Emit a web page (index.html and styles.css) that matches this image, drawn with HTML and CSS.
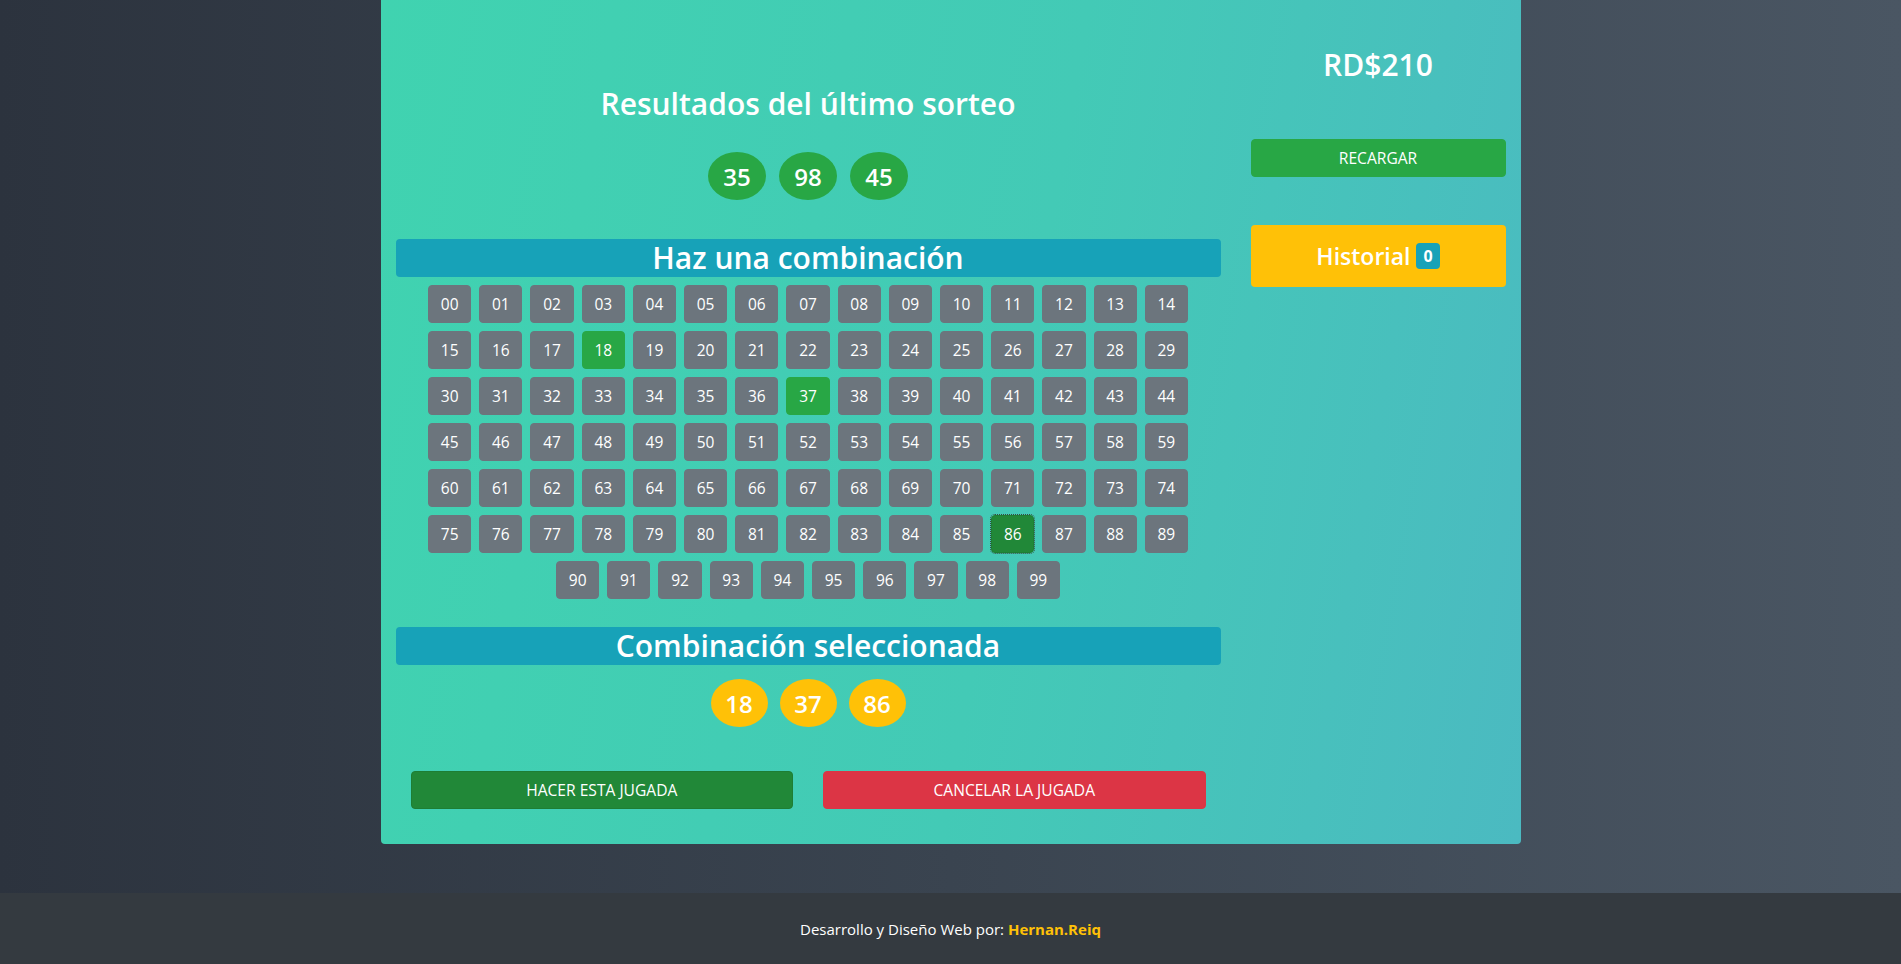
FILE: index.html
```html
<!DOCTYPE html>
<html lang="es">
<head>
<meta charset="utf-8">
<title>Lotería</title>
<link rel="stylesheet" href="styles.css">
</head>
<body>
<main class="page">
  <div class="card">
    <section class="col-main">
      <h3 class="title">Resultados del último sorteo</h3>
      <div class="balls balls-result">
        <span class="ball ball-green">35</span>
        <span class="ball ball-green">98</span>
        <span class="ball ball-green">45</span>
      </div>
      <h2 class="banner">Haz una combinación</h2>
      <div class="grid">
        <button class="num">00</button><button class="num">01</button><button class="num">02</button><button class="num">03</button><button class="num">04</button><button class="num">05</button><button class="num">06</button><button class="num">07</button><button class="num">08</button><button class="num">09</button><button class="num">10</button><button class="num">11</button><button class="num">12</button><button class="num">13</button><button class="num">14</button>
        <button class="num">15</button><button class="num">16</button><button class="num">17</button><button class="num num-on">18</button><button class="num">19</button><button class="num">20</button><button class="num">21</button><button class="num">22</button><button class="num">23</button><button class="num">24</button><button class="num">25</button><button class="num">26</button><button class="num">27</button><button class="num">28</button><button class="num">29</button>
        <button class="num">30</button><button class="num">31</button><button class="num">32</button><button class="num">33</button><button class="num">34</button><button class="num">35</button><button class="num">36</button><button class="num num-on">37</button><button class="num">38</button><button class="num">39</button><button class="num">40</button><button class="num">41</button><button class="num">42</button><button class="num">43</button><button class="num">44</button>
        <button class="num">45</button><button class="num">46</button><button class="num">47</button><button class="num">48</button><button class="num">49</button><button class="num">50</button><button class="num">51</button><button class="num">52</button><button class="num">53</button><button class="num">54</button><button class="num">55</button><button class="num">56</button><button class="num">57</button><button class="num">58</button><button class="num">59</button>
        <button class="num">60</button><button class="num">61</button><button class="num">62</button><button class="num">63</button><button class="num">64</button><button class="num">65</button><button class="num">66</button><button class="num">67</button><button class="num">68</button><button class="num">69</button><button class="num">70</button><button class="num">71</button><button class="num">72</button><button class="num">73</button><button class="num">74</button>
        <button class="num">75</button><button class="num">76</button><button class="num">77</button><button class="num">78</button><button class="num">79</button><button class="num">80</button><button class="num">81</button><button class="num">82</button><button class="num">83</button><button class="num">84</button><button class="num">85</button><button class="num num-focus">86</button><button class="num">87</button><button class="num">88</button><button class="num">89</button>
        <button class="num">90</button><button class="num">91</button><button class="num">92</button><button class="num">93</button><button class="num">94</button><button class="num">95</button><button class="num">96</button><button class="num">97</button><button class="num">98</button><button class="num">99</button>
      </div>
      <h2 class="banner banner-selected">Combinación seleccionada</h2>
      <div class="balls balls-selected">
        <span class="ball ball-yellow">18</span>
        <span class="ball ball-yellow">37</span>
        <span class="ball ball-yellow">86</span>
      </div>
      <div class="actions">
        <button class="btn btn-play">Hacer esta jugada</button>
        <button class="btn btn-cancel">Cancelar la jugada</button>
      </div>
    </section>
    <aside class="col-side">
      <h3 class="money">RD$210</h3>
      <button class="btn btn-recharge">Recargar</button>
      <button class="btn-history">Historial <span class="badge">0</span></button>
    </aside>
  </div>
</main>
<footer class="footer">
  <p class="credit">Desarrollo y Diseño Web por: <strong class="author">Hernan.Reiq</strong></p>
</footer>
</body>
</html>
```
FILE: styles.css
```css
* { box-sizing: border-box; }

html, body {
  margin: 0;
  padding: 0;
}

body {
  min-height: 964px;
  display: flex;
  flex-direction: column;
  font-family: "Open Sans", "Noto Sans", "Liberation Sans", sans-serif;
  color: #fff;
  background: linear-gradient(to right, #2c333e 0%, #3a4450 50%, #4a5663 100%);
}

.page {
  flex: 0 0 auto;
  padding-bottom: 49px;
}

.card {
  width: 1140px;
  margin: 0 auto;
  display: flex;
  align-items: flex-start;
  background: linear-gradient(100deg, #40d3b0 0%, #43cab6 55%, #4bbac1 100%);
  border-radius: 0 0 4px 4px;
  padding-bottom: 35px;
}

.col-main {
  width: 825px;
  margin: 0 15px;
  display: flex;
  flex-direction: column;
}

.col-side {
  width: 255px;
  margin: 0 15px;
  display: flex;
  flex-direction: column;
}

.title {
  margin: 87px 0 0;
  font-size: 30px;
  line-height: 34px;
  font-weight: 600;
  text-align: center;
}

.balls {
  display: flex;
  justify-content: center;
  gap: 13px;
}

.balls-result { margin-top: 31px; }
.balls-selected { margin-top: 14px; gap: 12px; }

.ball {
  width: 58px;
  height: 48px;
  border-radius: 50%;
  display: flex;
  align-items: center;
  justify-content: center;
  font-size: 24px;
  font-weight: 600;
  color: #fff;
}

.balls-selected .ball { width: 57px; }

.ball-green { background: #28a745; }
.ball-yellow { background: #ffc107; }

.banner {
  margin: 39px 0 0;
  height: 38px;
  line-height: 38px;
  background: #17a2b8;
  border-radius: 4px;
  font-size: 30px;
  font-weight: 600;
  text-align: center;
  color: #fff;
}

.banner-selected { margin-top: 24px; }

.grid {
  width: 768px;
  margin: 4px auto 0;
  display: flex;
  flex-wrap: wrap;
  justify-content: center;
}

.num {
  width: 43.2px;
  height: 38px;
  margin: 4px;
  padding: 0;
  border: 1px solid #6c757d;
  border-radius: 4px;
  background: #6c757d;
  color: #fff;
  font-family: inherit;
  font-size: 15.5px;
  line-height: 36px;
  text-align: center;
}

.num-on {
  background: #28a745;
  border-color: #28a745;
}

.num-focus {
  background: #218838;
  border-color: #1e7e34;
  outline: 1px dotted #3b4a3f;
  outline-offset: 0;
}

.actions {
  margin-top: 44px;
  padding: 0 15px;
  display: flex;
  gap: 30px;
}

.btn {
  height: 38px;
  border: 1px solid transparent;
  border-radius: 4px;
  font-family: inherit;
  font-size: 15.6px;
  text-transform: uppercase;
  color: #fff;
  padding: 0 12px;
  line-height: 36px;
}

.actions .btn { flex: 1 1 0; }

.btn-play { background: #218838; border-color: #1e7e34; }
.btn-cancel { background: #dc3545; border-color: #dc3545; }
.btn-recharge { background: #28a745; border-color: #28a745; margin-top: 56px; width: 100%; }

.money {
  margin: 47px 0 0;
  font-size: 30px;
  line-height: 36px;
  font-weight: 600;
  text-align: center;
}

.btn-history {
  margin-top: 48px;
  width: 100%;
  height: 62px;
  border: 0;
  border-radius: 4px;
  background: #ffc107;
  color: #fff;
  font-family: inherit;
  font-size: 23px;
  font-weight: 600;
  display: flex;
  align-items: center;
  justify-content: center;
  gap: 6px;
}

.badge {
  display: inline-block;
  background: #17a2b8;
  color: #fff;
  font-size: 16px;
  font-weight: 700;
  line-height: 26px;
  height: 26px;
  padding: 0 7px;
  border-radius: 4px;
}

.footer {
  margin-top: auto;
  height: 71px;
  background: #343a40;
  display: flex;
  align-items: center;
  justify-content: center;
}

.credit {
  margin: 0;
  font-size: 15px;
  color: #fff;
}

.author {
  color: #ffc107;
  font-weight: 700;
}
```
